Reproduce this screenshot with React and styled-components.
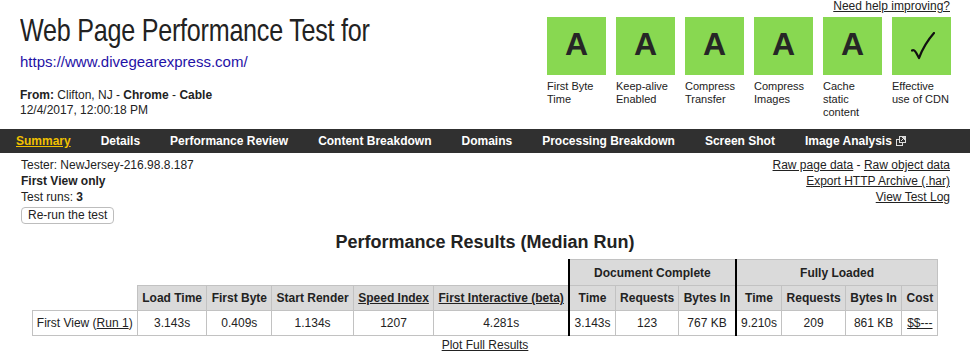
import React from 'react';
import styled, { createGlobalStyle } from 'styled-components';

const GlobalStyle = createGlobalStyle`
  body {
    margin: 0;
    font-family: "Liberation Sans", Arial, Helvetica, sans-serif;
    font-size: 12px;
    color: #222;
    background: #fff;
  }
  a {
    color: #222;
  }
`;

const Header = styled.header`
  display: flex;
  justify-content: space-between;
  align-items: flex-start;
  padding: 0 19px 0 20px;
`;

const TitleBlock = styled.div`
  padding-top: 11px;
`;

// the reference face is a condensed grotesque, so squeeze the regular one
const Title = styled.h1`
  margin: 0;
  font-size: 32px;
  font-weight: normal;
  line-height: 38px;
  letter-spacing: -0.3px;
  color: #222;
  white-space: nowrap;
  transform: scaleX(0.785);
  transform-origin: left center;
`;

const Url = styled.a`
  display: block;
  margin-top: 4px;
  font-size: 15px;
  line-height: 18px;
  color: #1f11a6;
  text-decoration: none;
`;

const Meta = styled.div`
  margin-top: 17px;
  line-height: 15px;
  b {
    font-weight: bold;
  }
`;

const GradesBlock = styled.div`
  display: flex;
  flex-direction: column;
  align-items: flex-end;
`;

const HelpLink = styled.a`
  display: block;
  line-height: 13px;
  padding-right: 1px;
`;

const Grades = styled.div`
  display: flex;
  gap: 10px;
  margin-top: 4px;
`;

const Grade = styled.div`
  width: 59px;
`;

const GradeBox = styled.div`
  height: 58px;
  background: #88d851;
  display: flex;
  align-items: center;
  justify-content: center;
  font-size: 32px;
  font-weight: bold;
  color: #262626;
  padding-bottom: 3px;
  box-sizing: border-box;
`;

const GradeLabel = styled.div`
  margin-top: 5px;
  font-size: 11px;
  line-height: 13px;
`;

const Nav = styled.nav`
  display: flex;
  gap: 30px;
  margin-top: 10px;
  height: 24px;
  padding-left: 16px;
  background: #303030;
`;

const NavItem = styled.a`
  display: flex;
  align-items: center;
  gap: 4px;
  font-weight: bold;
  line-height: 24px;
  color: ${(p) => (p.$active ? '#f2c100' : '#fff')};
  text-decoration: ${(p) => (p.$active ? 'underline' : 'none')};
`;

const Info = styled.section`
  display: flex;
  justify-content: space-between;
  padding: 4px 20px 0 21px;
  line-height: 16px;
`;

const InfoRight = styled.div`
  text-align: right;
`;

const Button = styled.button`
  display: block;
  margin-top: 2px;
  height: 17px;
  padding: 0 6px;
  font-family: inherit;
  font-size: 12px;
  line-height: 15px;
  color: #222;
  background: #fff;
  border: 1px solid #bdbdbd;
  border-radius: 4px;
`;

const SectionTitle = styled.h2`
  margin: 7px 0 6px;
  text-align: center;
  font-size: 18px;
  line-height: 22px;
  font-weight: bold;
  color: #222;
`;

const Table = styled.table`
  margin: 0 auto;
  border-collapse: collapse;
  font-size: 12px;
`;

const Blank = styled.th`
  padding: 0;
  border: none;
`;

const Th = styled.th`
  height: ${(p) => (p.$group ? '25px' : '24px')};
  padding: 0 4.3px;
  background: #dadada;
  border: 1px solid #c2c2c2;
  border-left: ${(p) => (p.$thick ? '2px solid #000' : '1px solid #c2c2c2')};
  font-weight: bold;
  white-space: nowrap;
  a {
    color: #222;
  }
`;

const Td = styled.td`
  height: 24px;
  padding: 0 4.3px;
  border: 1px solid #c2c2c2;
  border-left: ${(p) => (p.$thick ? '2px solid #000' : '1px solid #c2c2c2')};
  text-align: ${(p) => (p.$left ? 'left' : 'center')};
  white-space: nowrap;
`;

const PlotLink = styled.a`
  display: block;
  margin-top: 2px;
  text-align: center;
  line-height: 14px;
`;

const grades = [
  { grade: 'A', label: 'First Byte Time' },
  { grade: 'A', label: 'Keep-alive Enabled' },
  { grade: 'A', label: 'Compress Transfer' },
  { grade: 'A', label: 'Compress Images' },
  { grade: 'A', label: 'Cache static content' },
  { grade: 'check', label: 'Effective use of CDN' },
];

const navItems = [
  'Summary',
  'Details',
  'Performance Review',
  'Content Breakdown',
  'Domains',
  'Processing Breakdown',
  'Screen Shot',
  'Image Analysis',
];

const Check = () => (
  <svg width="24" height="28" viewBox="0 0 24 28" style={{ marginTop: 2, marginLeft: 2 }}>
    <path
      d="M1 18.5 C2.5 17.5 3.8 18.6 5 20.5 L8 26 C11 18 16 9 23 1"
      fill="none"
      stroke="#111"
      strokeWidth="2.2"
      strokeLinecap="round"
      strokeLinejoin="round"
    />
  </svg>
);

const ExternalIcon = () => (
  <svg width="10" height="10" viewBox="0 0 10 10">
    <rect x="0.5" y="3.5" width="6" height="6" fill="none" stroke="#ddd" />
    <rect x="3.5" y="0.5" width="6" height="6" fill="#303030" stroke="#ddd" />
    <path d="M5 5 L8.5 1.5 M6 1.5 H8.5 V4" fill="none" stroke="#ddd" />
  </svg>
);

const App = () => {
  return (
    <>
      <GlobalStyle />
      <Header>
        <TitleBlock>
          <Title>Web Page Performance Test for</Title>
          <Url href="#">https://www.divegearexpress.com/</Url>
          <Meta>
            <b>From:</b> Clifton, NJ - <b>Chrome</b> - <b>Cable</b>
            <br />
            12/4/2017, 12:00:18 PM
          </Meta>
        </TitleBlock>
        <GradesBlock>
          <HelpLink href="#">Need help improving?</HelpLink>
          <Grades>
            {grades.map((g) => (
              <Grade key={g.label}>
                <GradeBox>{g.grade === 'check' ? <Check /> : g.grade}</GradeBox>
                <GradeLabel>{g.label}</GradeLabel>
              </Grade>
            ))}
          </Grades>
        </GradesBlock>
      </Header>

      <Nav>
        {navItems.map((item, i) => (
          <NavItem key={item} href="#" $active={i === 0}>
            {item}
            {item === 'Image Analysis' && <ExternalIcon />}
          </NavItem>
        ))}
      </Nav>

      <Info>
        <div>
          <div>Tester: NewJersey-216.98.8.187</div>
          <div>
            <b>First View only</b>
          </div>
          <div>
            Test runs: <b>3</b>
          </div>
          <Button>Re-run the test</Button>
        </div>
        <InfoRight>
          <div>
            <a href="#">Raw page data</a> - <a href="#">Raw object data</a>
          </div>
          <div>
            <a href="#">Export HTTP Archive (.har)</a>
          </div>
          <div>
            <a href="#">View Test Log</a>
          </div>
        </InfoRight>
      </Info>

      <SectionTitle>Performance Results (Median Run)</SectionTitle>
      <Table>
        <thead>
          <tr>
            <Blank colSpan={6} />
            <Th colSpan={3} $thick $group>
              Document Complete
            </Th>
            <Th colSpan={4} $thick $group>
              Fully Loaded
            </Th>
          </tr>
          <tr>
            <Blank />
            <Th>Load Time</Th>
            <Th>First Byte</Th>
            <Th>Start Render</Th>
            <Th>
              <a href="#">Speed Index</a>
            </Th>
            <Th>
              <a href="#">First Interactive (beta)</a>
            </Th>
            <Th $thick>Time</Th>
            <Th>Requests</Th>
            <Th>Bytes In</Th>
            <Th $thick>Time</Th>
            <Th>Requests</Th>
            <Th>Bytes In</Th>
            <Th>Cost</Th>
          </tr>
        </thead>
        <tbody>
          <tr>
            <Td $left>
              First View (<a href="#">Run 1</a>)
            </Td>
            <Td>3.143s</Td>
            <Td>0.409s</Td>
            <Td>1.134s</Td>
            <Td>1207</Td>
            <Td>4.281s</Td>
            <Td $thick>3.143s</Td>
            <Td>123</Td>
            <Td>767 KB</Td>
            <Td $thick>9.210s</Td>
            <Td>209</Td>
            <Td>861 KB</Td>
            <Td>
              <a href="#">$$---</a>
            </Td>
          </tr>
        </tbody>
      </Table>
      <PlotLink href="#">Plot Full Results</PlotLink>
    </>
  );
};

export default App;
